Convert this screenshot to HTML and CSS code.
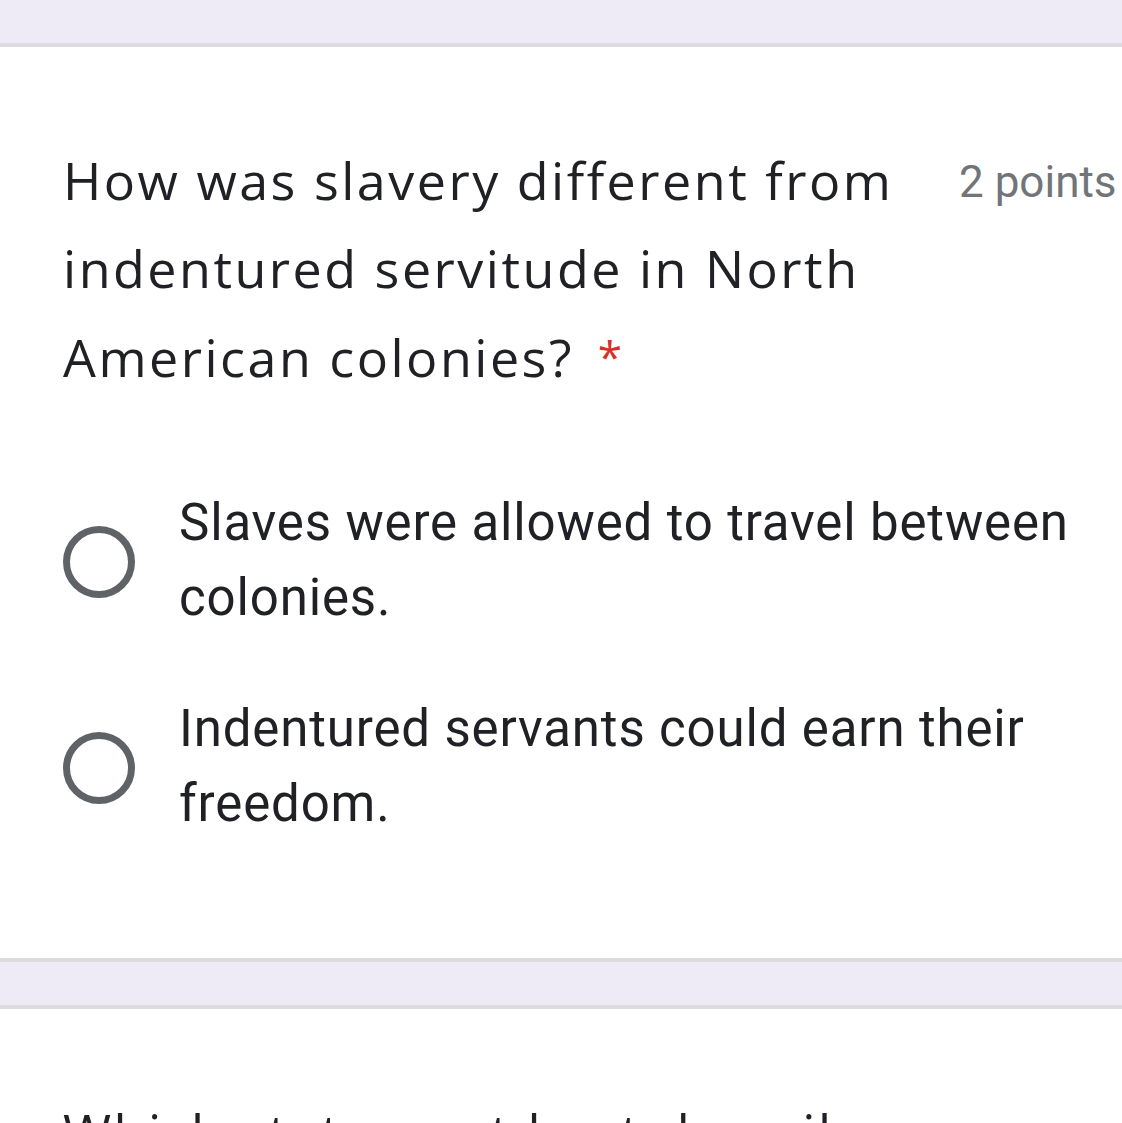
FILE: index.html
```html
<!DOCTYPE html>
<html lang="en">
<head>
<meta charset="utf-8">
<title>Quiz</title>
<link rel="stylesheet" href="styles.css">
</head>
<body>
<div class="band band-top"></div>
<section class="card">
  <div class="q-head">
    <h2 class="q-title">How was slavery different from indentured servitude in North American colonies?<span class="req">*</span></h2>
    <div class="q-points">2 points</div>
  </div>
  <div class="options">
    <label class="option">
      <span class="radio"></span>
      <span class="opt-text">Slaves were allowed to travel between colonies.</span>
    </label>
    <label class="option">
      <span class="radio"></span>
      <span class="opt-text">Indentured servants could earn their freedom.</span>
    </label>
  </div>
</section>
<div class="band band-mid"></div>
<section class="card card-next">
  <div class="q-head">
    <h2 class="q-title">Which statement best describes</h2>
  </div>
</section>
</body>
</html>
```

FILE: styles.css
```css
html, body {
  margin: 0;
  padding: 0;
  background: #ffffff;
  overflow: hidden;
}
body {
  width: 1122px;
  height: 1123px;
  font-family: Roboto, "Liberation Sans", sans-serif;
  color: #202124;
}
.band {
  background: #eeebf6;
}
.band-top {
  height: 43px;
  border-bottom: 4px solid #dcdbe0;
}
.band-mid {
  height: 43px;
  border-top: 4px solid #dcdbe0;
  border-bottom: 4px solid #dcdbe0;
}
.card {
  padding: 89px 0 117px 63px;
}
.card-next {
  padding-top: 79px;
}
.q-head {
  display: flex;
  align-items: flex-start;
  gap: 26px;
}
.q-title {
  margin: 0;
  width: 870px;
  flex: none;
  font-family: "Open Sans", sans-serif;
  font-weight: 400;
  font-size: 52px;
  letter-spacing: 2.5px;
  line-height: 88px;
  color: #202124;
}
.req {
  color: #d93025;
  font-size: 44px;
  letter-spacing: 0;
  margin-left: 24px;
  vertical-align: 4px;
}
.q-points {
  flex: none;
  white-space: nowrap;
  margin-top: 21px;
  font-size: 44px;
  line-height: 50px;
  color: #70757a;
}
.options {
  display: flex;
  flex-direction: column;
  gap: 56px;
  margin-top: 84px;
}
.option {
  display: flex;
  align-items: center;
}
.radio {
  flex: none;
  width: 58px;
  height: 58px;
  border: 7.5px solid #5f6368;
  border-radius: 50%;
  margin: 4px 44px 0 0;
}
.opt-text {
  width: 910px;
  font-size: 51px;
  letter-spacing: 0.85px;
  line-height: 75px;
  color: #202124;
}
```
